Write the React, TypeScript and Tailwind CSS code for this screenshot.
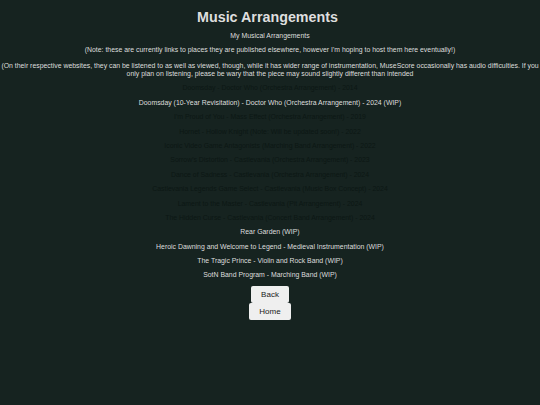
import React from 'react';

interface Piece {
  title: string;
  link: boolean;
}

const pieces: Piece[] = [
  { title: 'Doomsday - Doctor Who (Orchestra Arrangement) - 2014', link: true },
  { title: 'Doomsday (10-Year Revisitation) - Doctor Who (Orchestra Arrangement) - 2024 (WIP)', link: false },
  { title: "I'm Proud of You - Mass Effect (Orchestra Arrangement) - 2019", link: true },
  { title: 'Hornet - Hollow Knight (Note: Will be updated soon!) - 2022', link: true },
  { title: 'Iconic Video Game Antagonists (Marching Band Arrangement) - 2022', link: true },
  { title: "Sorrow's Distortion - Castlevania (Orchestra Arrangement) - 2023", link: true },
  { title: 'Dance of Sadness - Castlevania (Orchestra Arrangement) - 2024', link: true },
  { title: 'Castlevania Legends Game Select - Castlevania (Music Box Concept) - 2024', link: true },
  { title: 'Lament to the Master - Castlevania (Pit Arrangement) - 2024', link: true },
  { title: 'The Hidden Curse - Castlevania (Concert Band Arrangement) - 2024', link: true },
  { title: 'Rear Garden (WIP)', link: false },
  { title: 'Heroic Dawning and Welcome to Legend - Medieval Instrumentation (WIP)', link: false },
  { title: 'The Tragic Prince - Violin and Rock Band (WIP)', link: false },
  { title: 'SotN Band Program - Marching Band (WIP)', link: false },
];

export default function App() {
  return (
    <div className="min-h-[405px] bg-[#162320] text-[#dedede] text-center font-['Liberation_Sans',Arial,sans-serif] px-[1px] pb-4 pt-[1px]">
      <h1 className="text-[14.3px] leading-[16px] font-bold mt-[8px] mb-[5px] pr-[5px]">Music Arrangements</h1>
      <p className="text-[6.9px] leading-[8px] mt-[7px]">My Musical Arrangements</p>
      <p className="text-[6.9px] leading-[8px] mt-[6px]">
        (Note: these are currently links to places they are published elsewhere, however I'm hoping to host them here eventually!)
      </p>
      <p className="text-[6.9px] leading-[8px] mt-[8px] mb-[4px]">
        (On their respective websites, they can be listened to as well as viewed, though, while it has wider range of instrumentation, MuseScore occasionally has audio difficulties. If you only plan on listening, please be wary that the piece may sound slightly different than intended
      </p>
      {pieces.map((piece, index) => (
        <p key={index} className="text-[6.9px] leading-[8px] my-[6.4px]">
          {piece.link ? <a className="text-[#0c1714]">{piece.title}</a> : piece.title}
        </p>
      ))}
      <div className="flex flex-col items-center mt-[0px]">
        <button className="bg-[#efefef] text-[#1a1a1a] text-[8px] leading-[9px] px-[10px] py-[4px] rounded-[2px]">
          Back
        </button>
        <button className="bg-[#efefef] text-[#1a1a1a] text-[8px] leading-[9px] px-[10px] py-[4px] rounded-[2px]">
          Home
        </button>
      </div>
    </div>
  );
}
